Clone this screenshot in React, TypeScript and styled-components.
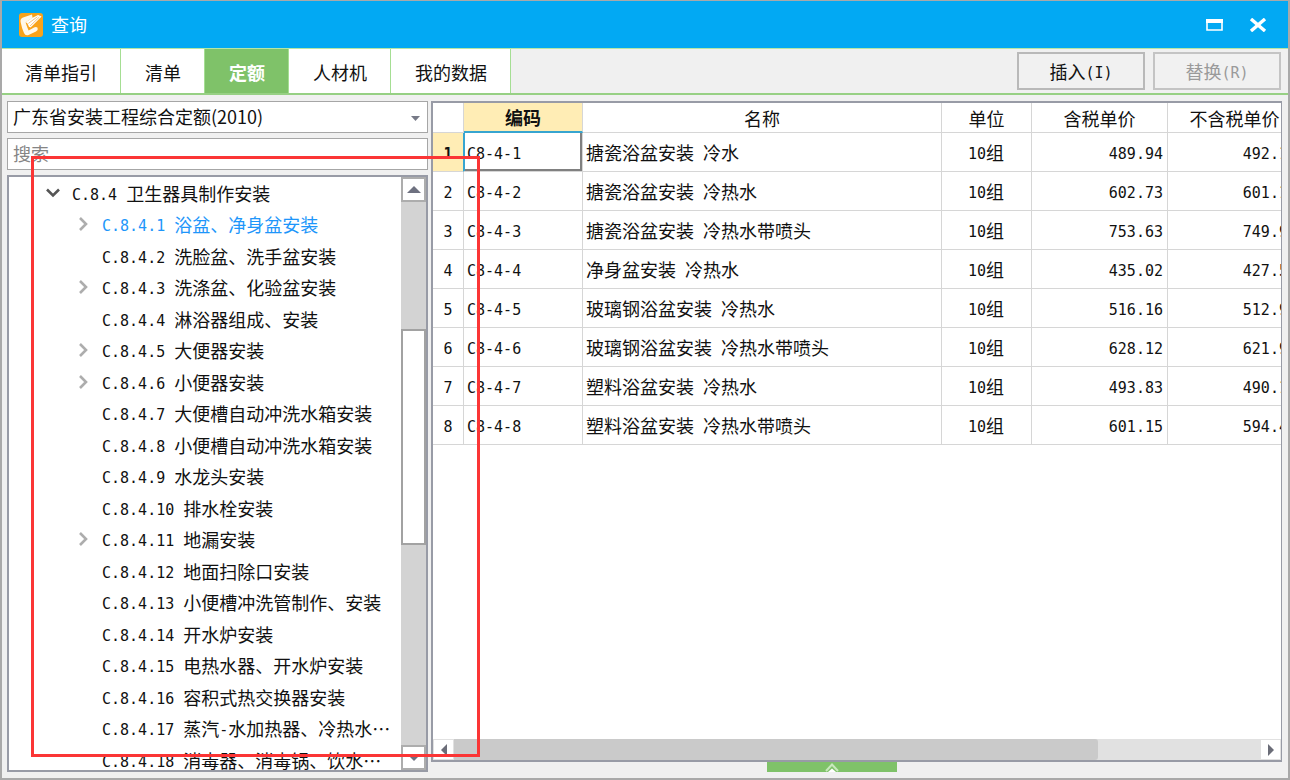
import React from "react";
import styled, { createGlobalStyle, css } from "styled-components";

const cjk = `"Noto Sans CJK SC", sans-serif`;
const mono = `"DejaVu Sans Mono", "Noto Sans CJK SC", monospace`;

const GlobalStyle = createGlobalStyle`
  *, *::before, *::after { box-sizing: border-box; }
  body { margin: 0; background: #f0f0f0; }
  button, input, select { font: inherit; color: inherit; margin: 0; border-radius: 0; }
`;

const Window = styled.div`
  position: relative;
  display: flex;
  flex-direction: column;
  height: 100vh;
  min-height: 480px;
  overflow: hidden;
  border: 2px solid #a9a9a9;
  border-top-width: 1px;
  background: #f0f0f0;
  color: #111;
  font-family: ${cjk};
  font-size: 18px;
  line-height: 24px;
`;

const Latin = styled.span`
  font-family: ${mono};
  font-size: 15px;
  line-height: 18px;
  vertical-align: 1px;
  white-space: pre;
`;

const TitleBar = styled.header`
  display: flex;
  align-items: center;
  flex: none;
  height: 47px;
  padding: 0 18px 0 17px;
  background: #02a9f3;
  color: #fff;
`;

const Title = styled.h1`
  flex: 1;
  margin: 0 0 2px 8px;
  font-size: 18px;
  font-weight: 400;
  line-height: 24px;
`;

const WindowButton = styled.button`
  display: grid;
  place-items: center;
  width: 24px;
  height: 24px;
  margin-left: 20px;
  padding: 0;
  border: 0;
  background: none;
`;

const Toolbar = styled.div`
  display: flex;
  align-items: center;
  justify-content: space-between;
  flex: none;
  height: 47px;
  padding-right: 7px;
  border-top: 1px solid #b5e6a6;
  border-bottom: 2px solid #97d084;
`;

const Tabs = styled.nav`
  display: flex;
  height: 100%;
  margin-left: -1px;
`;

const Tab = styled.button<{ $active?: boolean }>`
  padding: 2px 23px 0 24px;
  border: 0;
  border-right: 1px solid #a5de93;
  background: ${(p) => (p.$active ? "#7fc269" : "#fff")};
  color: ${(p) => (p.$active ? "#fff" : "#111")};
  font-weight: ${(p) => (p.$active ? 700 : 400)};
`;

const Actions = styled.div`
  display: flex;
  gap: 8px;
`;

const ActionButton = styled.button`
  width: 128px;
  height: 38px;
  padding: 0;
  border: 2px solid #b9b9b9;
  background: #f1f1f1;
  &:disabled { color: #9a9a9a; border-color: #c4c4c4; }
`;

const Body = styled.main`
  display: flex;
  flex: 1;
  gap: 3px;
  min-height: 0;
  padding: 6px 6px 6px 5px;
`;

const Sidebar = styled.aside`
  display: flex;
  flex-direction: column;
  flex: none;
  gap: 5px;
  width: 421px;
`;

const SelectBox = styled.div`
  position: relative;
`;

const field = css`
  display: block;
  width: 100%;
  height: 32px;
  padding: 0 4px 2px 5px;
  border: 1px solid #a6a6a6;
  background: #fff;
  outline: 0;
`;

const Select = styled.select`
  ${field}
  appearance: none;
`;

const SelectArrow = styled.svg`
  position: absolute;
  right: 8px;
  top: 14px;
  pointer-events: none;
`;

const Search = styled.input`
  ${field}
  &::placeholder { color: #858585; opacity: 1; }
`;

const TreePanel = styled.div`
  display: flex;
  flex: 1;
  min-height: 0;
  border: 2px solid #989ba6;
  background: #fff;
`;

const TreeList = styled.ul`
  flex: 1;
  min-width: 0;
  margin: 0;
  padding: 0;
  overflow: hidden;
  list-style: none;
`;

const TreeItem = styled.li<{ $level: number; $selected?: boolean }>`
  display: flex;
  align-items: center;
  height: 31px;
  padding-left: ${(p) => 35 + p.$level * 30}px;
  color: ${(p) => (p.$selected ? "#1e96fa" : "inherit")};
  white-space: nowrap;
  &:nth-child(even) { height: 32px; }
`;

const Twisty = styled.button`
  display: grid;
  place-items: center;
  width: 18px;
  height: 18px;
  margin-right: 10px;
  padding: 0;
  border: 0;
  background: none;
`;

const TwistySpace = styled.span`
  width: 28px;
`;

const VScroll = styled.div`
  display: flex;
  flex-direction: column;
  flex: none;
  width: 25px;
  background: #d3d3d3;
`;

const VThumb = styled.div`
  flex: 213;
  border: 2px solid #a2a2a2;
  background: #fff;
`;

const Space = styled.div<{ $grow: number }>`
  flex: ${(p) => p.$grow};
`;

const ScrollButton = styled.button<{ $size: number }>`
  display: grid;
  place-items: center;
  flex: none;
  height: ${(p) => p.$size}px;
  width: ${(p) => p.$size}px;
  padding: 0;
  border: ${(p) => (p.$size > 22 ? "2px solid #adadad" : "1px solid #e1e1e1")};
  background: #fff;
`;

const Content = styled.section`
  display: flex;
  flex-direction: column;
  flex: 1;
  min-width: 0;
`;

const GridPanel = styled.div`
  display: flex;
  flex-direction: column;
  flex: 1;
  min-height: 0;
  border: 2px solid #989ba6;
  border-right-width: 1px;
  background: #fff;
`;

const GridView = styled.div`
  flex: 1;
  overflow: hidden;
`;

const Table = styled.table`
  width: 869px;
  min-width: 100%;
  table-layout: fixed;
  border-collapse: separate;
  border-spacing: 0;
  white-space: nowrap;
`;

const HeadCell = styled.th<{ $active?: boolean }>`
  height: 30px;
  padding: 0;
  border-right: 1px solid #d6d6d6;
  border-bottom: ${(p) => (p.$active ? "2px solid #37a5d0" : "1px solid #d6d6d6")};
  background: ${(p) => (p.$active ? "#ffedb5" : "#fff")};
  font-weight: ${(p) => (p.$active ? 700 : 400)};
  text-align: center;
`;

const cell = css`
  height: 39px;
  border-right: 1px solid #d6d6d6;
  border-bottom: 1px solid #d6d6d6;
`;

const RowNumber = styled.th<{ $active?: boolean }>`
  ${cell}
  padding: 0;
  font-weight: ${(p) => (p.$active ? 700 : 400)};
  background: ${(p) => (p.$active ? "#ffedb5" : "#fff")};
  border-right-color: ${(p) => (p.$active ? "#37a5d0" : "#d6d6d6")};
`;

const Cell = styled.td<{ $align?: "center" | "right"; $focus?: boolean }>`
  ${cell}
  padding: 0 4px 0 3px;
  text-align: ${(p) => p.$align ?? "left"};
  ${(p) =>
    p.$focus &&
    css`
      box-shadow: inset 1px 0 #37a5d0, inset -2px -2px #808080;
    `}
`;

const HScroll = styled.div`
  display: flex;
  flex: none;
  height: 21px;
  background: #e1e1e1;
`;

const HThumb = styled.div`
  flex: 646;
  border-radius: 0 3px 3px 0;
  background: #cacaca;
`;

const Footer = styled.div`
  display: flex;
  justify-content: center;
  flex: none;
  height: 10px;
  padding-right: 50px;
`;

const Expand = styled.button`
  display: grid;
  place-items: end center;
  width: 130px;
  height: 10px;
  padding: 0;
  border: 0;
  background: #7fc269;
`;

const Highlight = styled.div`
  position: absolute;
  left: 29px;
  top: 155px;
  width: 449px;
  height: 601px;
  border: 3px solid #fb3535;
  pointer-events: none;
`;

/* Half-width characters take half the advance of a full-width one. */
function Text({ children }: { children: string }) {
  return (
    <span>
      {children
        .split(/([\x20-\x7e]+)/)
        .filter(Boolean)
        .map((part, i) => (/^[\x20-\x7e]/.test(part) ? <Latin key={i}>{part}</Latin> : part))}
    </span>
  );
}

const arrows = {
  up: "M0 8 L7 1 L14 8Z",
  down: "M0 1 L7 8 L14 1Z",
};

function VArrow({ dir }: { dir: "up" | "down" }) {
  return (
    <svg width="14" height="9" aria-hidden="true">
      <path d={arrows[dir]} fill="#6e7180" />
    </svg>
  );
}

function HArrow({ left }: { left?: boolean }) {
  return (
    <svg width="8" height="14" aria-hidden="true">
      <path d={left ? "M7 1 L1 7 L7 13Z" : "M1 1 L7 7 L1 13Z"} fill="#6b6d78" />
    </svg>
  );
}

type Node = { label: string; level: number; state?: "open" | "closed"; selected?: boolean };

const nodes: Node[] = [
  { label: "C.8.4 卫生器具制作安装", level: 0, state: "open" },
  { label: "C.8.4.1 浴盆、净身盆安装", level: 1, state: "closed", selected: true },
  { label: "C.8.4.2 洗脸盆、洗手盆安装", level: 1 },
  { label: "C.8.4.3 洗涤盆、化验盆安装", level: 1, state: "closed" },
  { label: "C.8.4.4 淋浴器组成、安装", level: 1 },
  { label: "C.8.4.5 大便器安装", level: 1, state: "closed" },
  { label: "C.8.4.6 小便器安装", level: 1, state: "closed" },
  { label: "C.8.4.7 大便槽自动冲洗水箱安装", level: 1 },
  { label: "C.8.4.8 小便槽自动冲洗水箱安装", level: 1 },
  { label: "C.8.4.9 水龙头安装", level: 1 },
  { label: "C.8.4.10 排水栓安装", level: 1 },
  { label: "C.8.4.11 地漏安装", level: 1, state: "closed" },
  { label: "C.8.4.12 地面扫除口安装", level: 1 },
  { label: "C.8.4.13 小便槽冲洗管制作、安装", level: 1 },
  { label: "C.8.4.14 开水炉安装", level: 1 },
  { label: "C.8.4.15 电热水器、开水炉安装", level: 1 },
  { label: "C.8.4.16 容积式热交换器安装", level: 1 },
  { label: "C.8.4.17 蒸汽-水加热器、冷热水…", level: 1 },
  { label: "C.8.4.18 消毒器、消毒锅、饮水…", level: 1 },
];

const rows: [string, string, number, number][] = [
  ["C8-4-1", "搪瓷浴盆安装 冷水", 489.94, 492.1],
  ["C8-4-2", "搪瓷浴盆安装 冷热水", 602.73, 601.1],
  ["C8-4-3", "搪瓷浴盆安装 冷热水带喷头", 753.63, 749.9],
  ["C8-4-4", "净身盆安装 冷热水", 435.02, 427.5],
  ["C8-4-5", "玻璃钢浴盆安装 冷热水", 516.16, 512.9],
  ["C8-4-6", "玻璃钢浴盆安装 冷热水带喷头", 628.12, 621.9],
  ["C8-4-7", "塑料浴盆安装 冷热水", 493.83, 490.1],
  ["C8-4-8", "塑料浴盆安装 冷热水带喷头", 601.15, 594.4],
];

const tabs = ["清单指引", "清单", "定额", "人材机", "我的数据"];

export default function App() {
  return (
    <>
      <GlobalStyle />
      <Window lang="zh-CN">
        <TitleBar>
          <svg width="24" height="24" viewBox="0 0 24 24" aria-hidden="true">
            <rect width="24" height="24" rx="3" fill="#f9a31b" />
            <path
              d="M13 1.600 L4 4.600 Q1 6 1.600 9 Q2.600 14.500 5 20 Q6.300 23.200 9.500 22 L17 18.400 Q19.400 17 18.600 14.800 Q17 13.400 15 14.600 L9.600 17.400 Q8 14 6.600 9.600 Q9 7.400 13.600 5 Z"
              fill="#fff8ea"
            />
            <path d="M6.800 9.200 L13 5 L19 2 L22.600 3.400 L11.600 14.600 Q9.400 14 9.200 12 Q8.600 9.800 6.800 9.200Z" fill="#fff" />
            <path d="M9.400 10.400 L18.400 3.800 M11 13 L20.400 4" stroke="#f5bd6f" strokeWidth="0.9" />
          </svg>
          <Title>查询</Title>
          <WindowButton aria-label="最大化">
            <svg width="17" height="12" aria-hidden="true">
              <path d="M1 1H16V11H1Z" fill="none" stroke="#fff" strokeWidth="1.600" />
              <path d="M0 0H17V4H0Z" fill="#fff" />
            </svg>
          </WindowButton>
          <WindowButton aria-label="关闭">
            <svg width="18" height="14" aria-hidden="true">
              <path d="M2 1 L16 13 M16 1 L2 13" stroke="#fff" strokeWidth="3.400" />
            </svg>
          </WindowButton>
        </TitleBar>

        <Toolbar>
          <Tabs>
            {tabs.map((name) => (
              <Tab key={name} $active={name === "定额"}>
                {name}
              </Tab>
            ))}
          </Tabs>
          <Actions>
            <ActionButton>
              <Text>插入(I)</Text>
            </ActionButton>
            <ActionButton disabled>
              <Text>替换(R)</Text>
            </ActionButton>
          </Actions>
        </Toolbar>

        <Body>
          <Sidebar>
            <SelectBox>
              <Select aria-label="定额库">
                <option>广东省安装工程综合定额(2010)</option>
              </Select>
              <SelectArrow width="9" height="6" aria-hidden="true">
                <path d="M0 1H9L4.500 6Z" fill="#777a87" />
              </SelectArrow>
            </SelectBox>
            <Search type="text" aria-label="搜索" placeholder="搜索" />
            <TreePanel>
              <TreeList>
                {nodes.map((n) => (
                  <TreeItem key={n.label} $level={n.level} $selected={n.selected}>
                    {n.state ? (
                      <Twisty aria-label={n.state === "open" ? "折叠" : "展开"} aria-expanded={n.state === "open"}>
                        {n.state === "open" ? (
                          <svg width="14" height="10" aria-hidden="true">
                            <path d="M1 1.500 L7 7.500 L13 1.500" fill="none" stroke="#555" strokeWidth="2.600" />
                          </svg>
                        ) : (
                          <svg width="10" height="14" aria-hidden="true">
                            <path d="M2 1 L8 7 L2 13" fill="none" stroke="#adadad" strokeWidth="2.600" />
                          </svg>
                        )}
                      </Twisty>
                    ) : (
                      <TwistySpace />
                    )}
                    <Text>{n.label}</Text>
                  </TreeItem>
                ))}
              </TreeList>
              <VScroll>
                <ScrollButton $size={25} aria-label="向上滚动">
                  <VArrow dir="up" />
                </ScrollButton>
                <Space $grow={128} />
                <VThumb />
                <Space $grow={201} />
                <ScrollButton $size={25} aria-label="向下滚动">
                  <VArrow dir="down" />
                </ScrollButton>
              </VScroll>
            </TreePanel>
          </Sidebar>

          <Content>
            <GridPanel>
              <GridView>
                <Table>
                  <colgroup>
                    <col style={{ width: 31 }} />
                    <col style={{ width: 119 }} />
                    <col />
                    <col style={{ width: 90 }} />
                    <col style={{ width: 136 }} />
                    <col style={{ width: 134 }} />
                  </colgroup>
                  <thead>
                    <tr>
                      <HeadCell aria-label="序号" />
                      <HeadCell $active>编码</HeadCell>
                      <HeadCell>名称</HeadCell>
                      <HeadCell>单位</HeadCell>
                      <HeadCell>含税单价</HeadCell>
                      <HeadCell>不含税单价</HeadCell>
                    </tr>
                  </thead>
                  <tbody>
                    {rows.map(([code, name, taxed, untaxed], i) => (
                      <tr key={code}>
                        <RowNumber scope="row" $active={i === 0}>
                          <Text>{String(i + 1)}</Text>
                        </RowNumber>
                        <Cell $focus={i === 0}>
                          <Text>{code}</Text>
                        </Cell>
                        <Cell>
                          <Text>{name}</Text>
                        </Cell>
                        <Cell $align="center">
                          <Text>10组</Text>
                        </Cell>
                        <Cell $align="right">
                          <Text>{taxed.toFixed(2)}</Text>
                        </Cell>
                        <Cell $align="right">
                          <Text>{untaxed.toFixed(2)}</Text>
                        </Cell>
                      </tr>
                    ))}
                  </tbody>
                </Table>
              </GridView>
              <HScroll>
                <ScrollButton $size={21} aria-label="向左滚动">
                  <HArrow left />
                </ScrollButton>
                <HThumb />
                <Space $grow={162} />
                <ScrollButton $size={21} aria-label="向右滚动">
                  <HArrow />
                </ScrollButton>
              </HScroll>
            </GridPanel>
            <Footer>
              <Expand aria-label="展开详情">
                <svg width="14" height="9" aria-hidden="true">
                  <path d="M1 8 L7 1.500 L13 8" fill="none" stroke="#c9e8be" strokeWidth="2" />
                  <path d="M3 9 L7 5.500 L11 9Z" fill="#fff" />
                </svg>
              </Expand>
            </Footer>
          </Content>
        </Body>
        <Highlight />
      </Window>
    </>
  );
}
